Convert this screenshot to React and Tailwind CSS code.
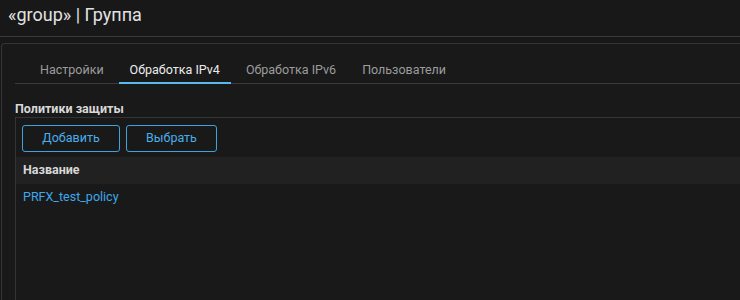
const tabs = ["Настройки", "Обработка IPv4", "Обработка IPv6", "Пользователи"];

export default function App() {
  const active = 1;

  return (
    <div className="h-[300px] w-[740px] overflow-hidden bg-[#181818] font-['Roboto','Liberation_Sans',sans-serif] text-[#dcdcdc]">
      {/* Заголовок */}
      <div className="flex h-[37px] items-center border-b border-[#3a3a3a] px-[8px] pb-[7px]">
        <h1 className="text-[18px] leading-none text-[#e2e2e2]">«group» | Группа</h1>
      </div>

      <div className="ml-[1px] mt-[6px] h-[260px] rounded-tl-[4px] border-l border-t border-[#343434] bg-[#191919] pl-[13px]">
        {/* Вкладки */}
        <div className="flex h-[40px] items-end gap-[4px] border-b border-[#3a3a3a] pl-[14px]">
          {tabs.map((t, i) => (
            <div
              key={t}
              className={
                i === active
                  ? "-mb-px border-b-2 border-[#5bb8ec] px-[11px] pb-[5px] text-[12.5px] leading-[15px] text-[#ececec]"
                  : "px-[11px] pb-[6px] text-[12.5px] leading-[15px] text-[#9c9c9c]"
              }
            >
              {t}
            </div>
          ))}
        </div>

        {/* Политики защиты */}
        <div className="mt-[16px] text-[12.5px] font-bold leading-[17px] text-[#d8d8d8]">Политики защиты</div>
        <div className="h-[200px] border-l border-t border-[#343434]">
          <div className="flex gap-[6px] px-[6px] pt-[7px]">
            <button className="h-[27px] w-[98px] rounded-[3px] border border-[#3fa3dd] text-[12.5px] text-[#4aaeea]">Добавить</button>
            <button className="h-[27px] w-[91px] rounded-[3px] border border-[#3fa3dd] text-[12.5px] text-[#4aaeea]">Выбрать</button>
          </div>
          <div className="mt-[5px] flex h-[27px] items-center bg-[#212121] px-[7px] text-[12.5px] font-bold text-[#d8d8d8]">
            Название
          </div>
          <div className="flex h-[26px] items-center px-[7px] text-[12.5px] text-[#3ea8ee]">PRFX_test_policy</div>
        </div>
      </div>
    </div>
  );
}
